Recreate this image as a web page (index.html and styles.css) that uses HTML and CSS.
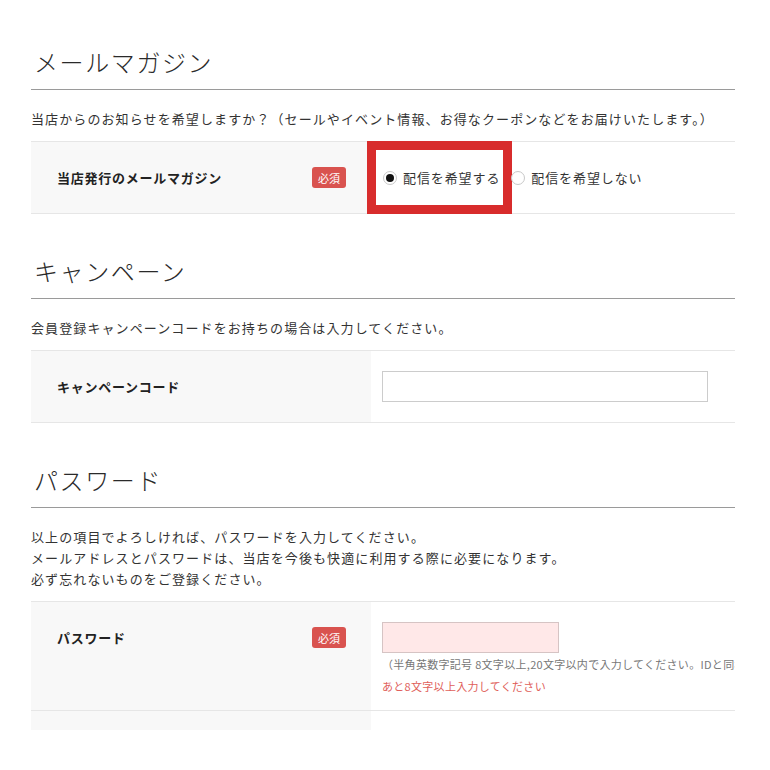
FILE: index.html
```html
<!DOCTYPE html>
<html lang="ja">
<head>
<meta charset="utf-8">
<title>会員登録</title>
<link rel="stylesheet" href="styles.css">
</head>
<body>
<div class="page">
  <section class="section first">
    <h2 class="heading">メールマガジン</h2>
    <p class="desc">当店からのお知らせを希望しますか？（セールやイベント情報、お得なクーポンなどをお届けいたします。）</p>
    <div class="table">
      <div class="row">
        <div class="label-cell"><span class="label">当店発行のメールマガジン</span><span class="badge">必須</span></div>
        <div class="value-cell radios">
          <label class="radio-item"><span class="radio checked"></span><span>配信を希望する</span></label>
          <label class="radio-item second"><span class="radio"></span><span>配信を希望しない</span></label>
          <div class="highlight"></div>
        </div>
      </div>
    </div>
  </section>

  <section class="section">
    <h2 class="heading">キャンペーン</h2>
    <p class="desc">会員登録キャンペーンコードをお持ちの場合は入力してください。</p>
    <div class="table">
      <div class="row">
        <div class="label-cell"><span class="label">キャンペーンコード</span></div>
        <div class="value-cell"><div class="input wide"></div></div>
      </div>
    </div>
  </section>

  <section class="section">
    <h2 class="heading">パスワード</h2>
    <p class="desc">以上の項目でよろしければ、パスワードを入力してください。<br>メールアドレスとパスワードは、当店を今後も快適に利用する際に必要になります。<br>必ず忘れないものをご登録ください。</p>
    <div class="table">
      <div class="row">
        <div class="label-cell"><span class="label">パスワード</span><span class="badge">必須</span></div>
        <div class="value-cell stack">
          <div class="input short error"></div>
          <p class="hint">（半角英数字記号 8文字以上,20文字以内で入力してください。IDと同様のパスワードは使用できません。）</p>
          <p class="err">あと8文字以上入力してください</p>
        </div>
      </div>
      <div class="row tail">
        <div class="label-cell"></div>
        <div class="value-cell"></div>
      </div>
    </div>
  </section>
</div>
</body>
</html>
```

FILE: styles.css
```css
html, body {
  margin: 0;
  padding: 0;
  background: #fff;
}
body {
  font-family: "Noto Sans CJK JP", "Noto Sans", sans-serif;
  color: #333;
}
.page {
  margin-left: 31px;
  width: 704px;
  overflow: hidden;
  padding-top: 44px;
}
.section {
  margin-top: 39px;
}
.section.first {
  margin-top: 0;
}
.heading {
  margin: 0;
  font-size: 24px;
  font-weight: 300;
  line-height: 36px;
  letter-spacing: 1.6px;
  color: #2a2a2a;
  padding-left: 3px;
  padding-bottom: 9px;
  border-bottom: 1px solid #9a9a9a;
}
.desc {
  margin: 18px 0 12px;
  font-size: 13px;
  line-height: 21px;
  letter-spacing: 1.1px;
  color: #333;
}
.table {
  border-top: 1px solid #e6e6e6;
}
.row {
  display: grid;
  grid-template-columns: 340px 1fr;
  border-bottom: 1px solid #e6e6e6;
}
.label-cell {
  background: #f8f8f8;
  padding: 25px 25px 25px 26px;
  display: flex;
  justify-content: space-between;
  align-items: flex-start;
  min-height: 21px;
}
.label {
  font-size: 13px;
  font-weight: 700;
  line-height: 21px;
  letter-spacing: 0.75px;
  color: #222;
}
.badge {
  display: inline-flex;
  align-items: center;
  justify-content: center;
  width: 34px;
  height: 21px;
  background: #d9534f;
  color: #fff;
  font-size: 11px;
  border-radius: 3px;
}
.value-cell {
  padding: 20px 0 20px 11px;
  position: relative;
}
.radios {
  display: flex;
  align-items: center;
  padding-top: 0;
  padding-bottom: 0;
  padding-left: 12px;
}
.radio-item {
  display: flex;
  align-items: center;
  gap: 6px;
  font-size: 13px;
  letter-spacing: 0.9px;
  color: #333;
  line-height: 21px;
  position: relative;
  z-index: 1;
}
.radio-item.second {
  margin-left: 11px;
}
.radio {
  width: 14px;
  height: 14px;
  box-sizing: border-box;
  border: 1px solid #c8c8c8;
  border-radius: 50%;
  background: #fff;
  display: inline-flex;
  align-items: center;
  justify-content: center;
}
.radio.checked::after {
  content: "";
  width: 8px;
  height: 8px;
  border-radius: 50%;
  background: #111;
}
.highlight {
  position: absolute;
  left: -4px;
  top: -1px;
  width: 127px;
  height: 55px;
  border: 9px solid #d82c2c;
  background: #fff;
  z-index: 0;
}
.input {
  box-sizing: border-box;
  height: 31px;
  border: 1px solid #ccc;
  background: #fff;
}
.input.wide {
  width: 326px;
}
.input.short {
  width: 177px;
}
.input.error {
  background: #ffe8e8;
  border-color: #d6c4c4;
}
.stack {
  padding-bottom: 13px;
}
.hint {
  margin: 0;
  font-size: 11px;
  line-height: 22px;
  letter-spacing: 0.3px;
  color: #777;
  white-space: nowrap;
}
.err {
  margin: 0;
  font-size: 11px;
  line-height: 22px;
  letter-spacing: 0.3px;
  color: #e0605a;
}
.row.tail .label-cell,
.row.tail .value-cell {
  padding: 0;
  min-height: 19px;
}
.row.tail {
  border-bottom: none;
}
```
